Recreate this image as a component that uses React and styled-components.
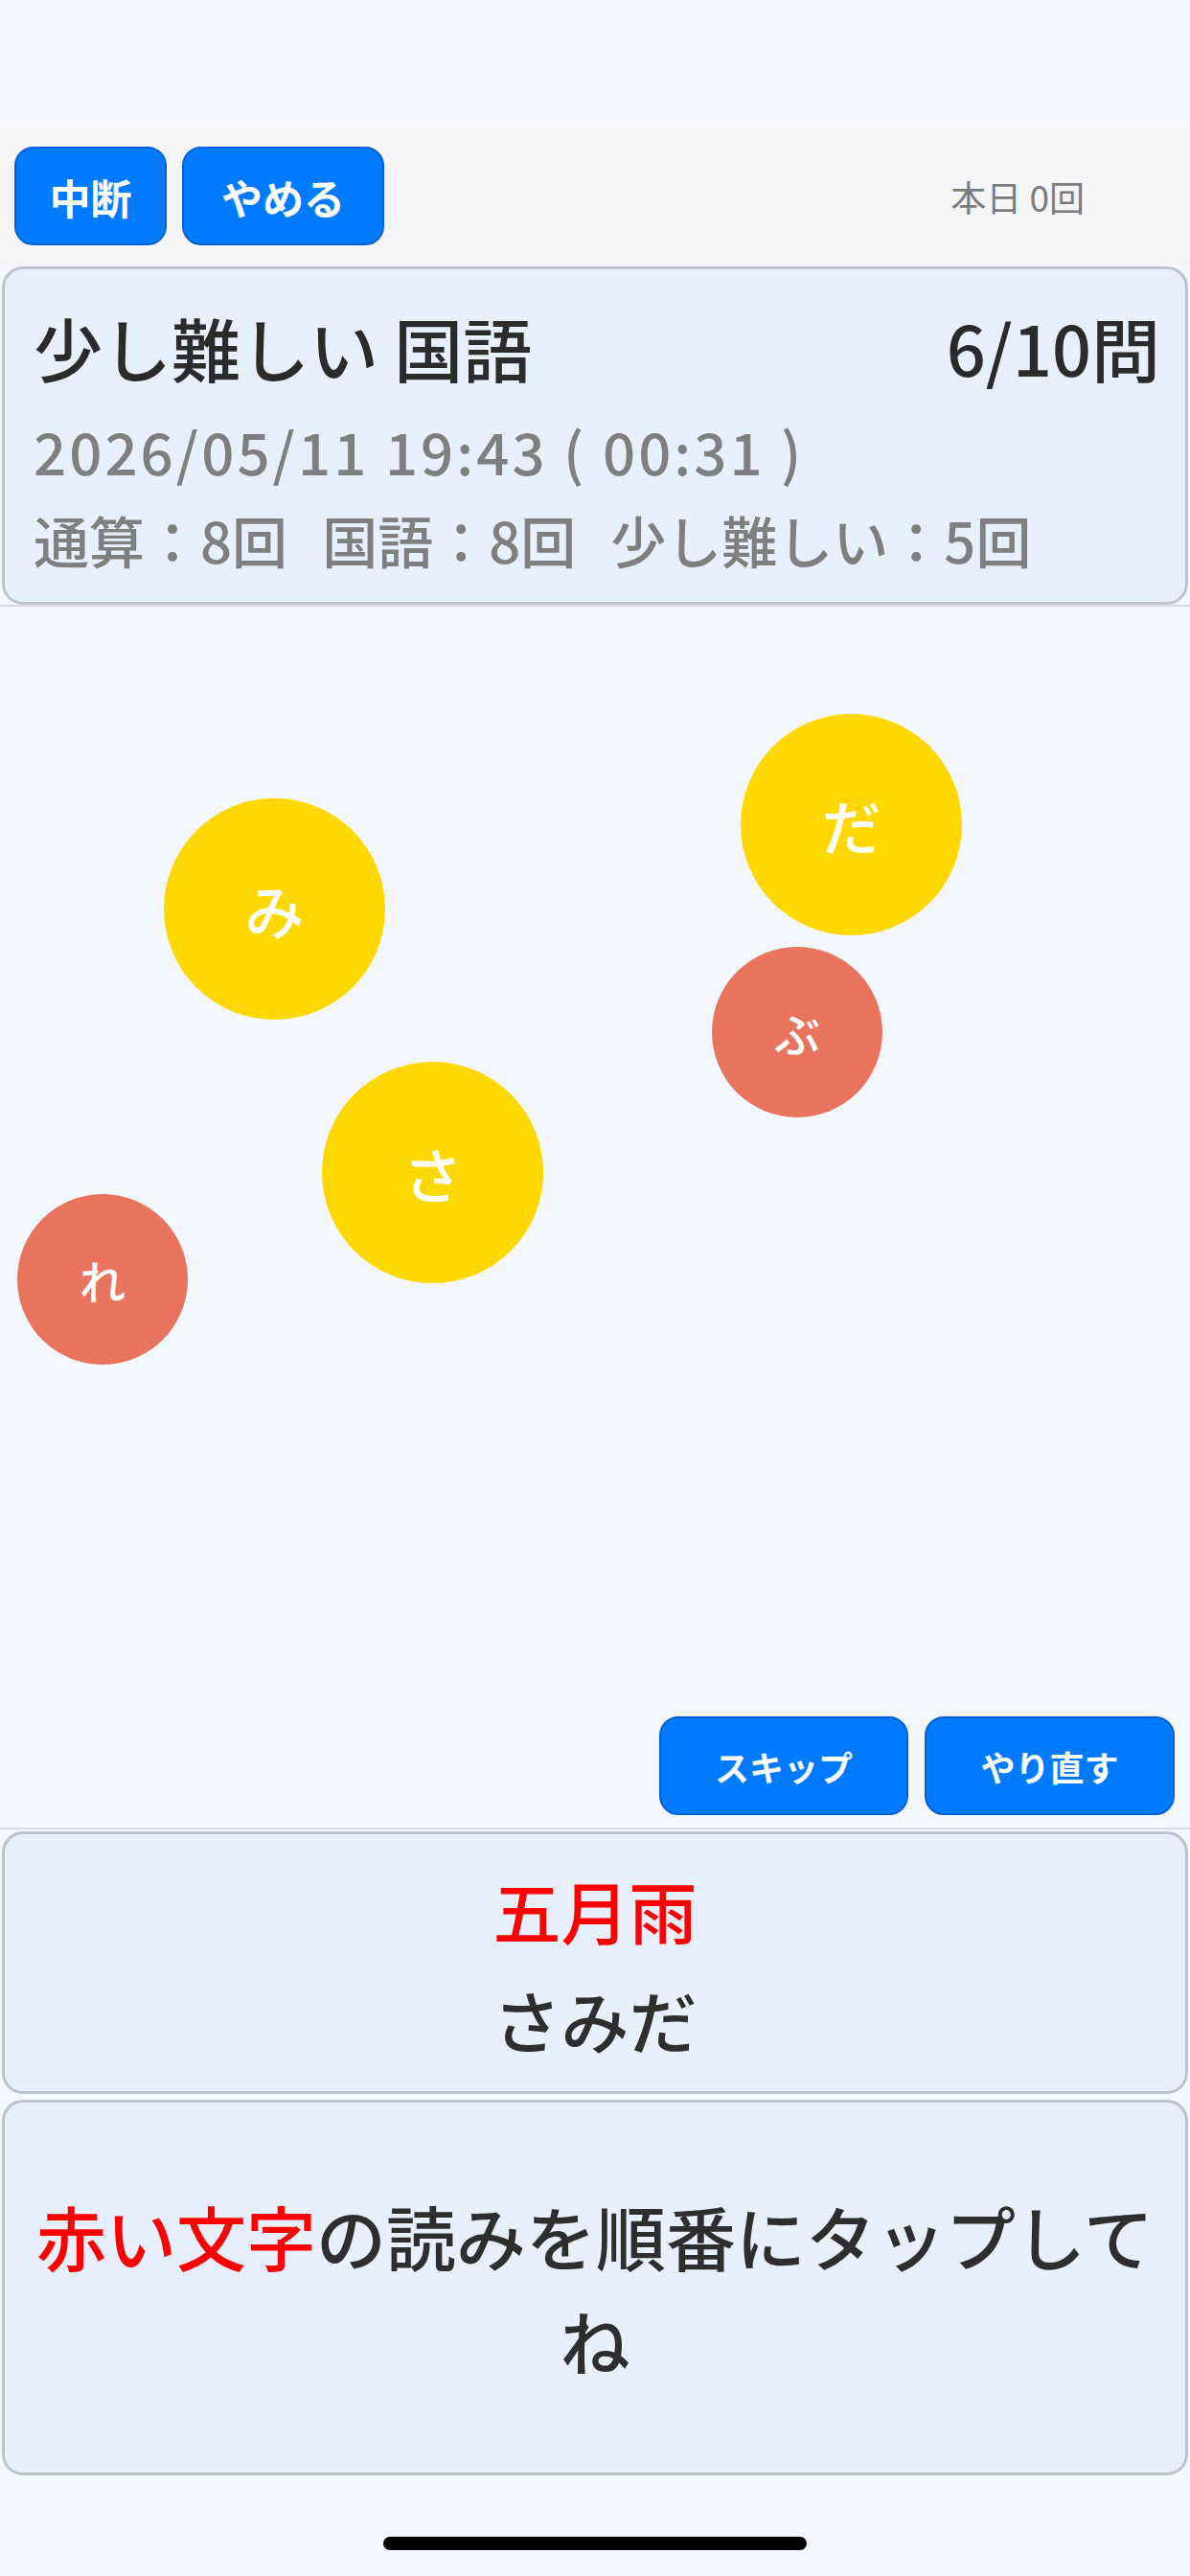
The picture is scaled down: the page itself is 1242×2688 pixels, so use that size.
import React from 'react'
import styled, { createGlobalStyle } from 'styled-components';

const GlobalStyle = createGlobalStyle`
  html, body {
    margin: 0;
    padding: 0;
    background: #f4f7fe;
  }
  body {
    font-family: "Noto Sans CJK JP", "Noto Sans", sans-serif;
    color: #333333;
  }
  * {
    box-sizing: border-box;
  }
`;

const Screen = styled.div`
  width: 1242px;
  min-height: 2688px;
  display: flex;
  flex-direction: column;
  background: #f4f7fe;
`;

const StatusArea = styled.div`
  height: 132px;
`;

const Toolbar = styled.div`
  height: 145px;
  background: #f5f5f7;
  display: flex;
  align-items: center;
  padding: 0 0 0 15px;
  gap: 16px;
`;

const BlueButton = styled.button`
  height: 103px;
  width: ${p => p.$width}px;
  padding: 0;
  border: 2px solid #0062d6;
  border-radius: 20px;
  background: #007aff;
  color: #ffffff;
  font-family: inherit;
  font-size: ${p => p.$size}px;
  font-weight: 700;
  display: flex;
  align-items: center;
  justify-content: center;
`;

const TodayLabel = styled.div`
  margin-left: auto;
  margin-right: 110px;
  font-size: 37px;
  color: #7c7c7c;
`;

const TopSection = styled.div`
  border-bottom: 2px solid #d9dbe0;
`;

const Card = styled.div`
  margin: 1px 2px 0;
  background: #e8effd;
  border: 3px solid #bfc3cc;
  border-radius: 22px;
`;

const InfoCard = styled(Card)`
  padding: 30px 26px 17px 30px;
  height: 353px;
`;

const TitleRow = styled.div`
  display: flex;
  justify-content: space-between;
  align-items: center;
  height: 100px;
  font-size: 72px;
  font-weight: 500;
  color: #2b2b2b;
  margin-bottom: 14px;
`;

const MetaLine = styled.div`
  height: ${p => p.$h}px;
  line-height: ${p => p.$h}px;
  font-size: ${p => p.$size}px;
  letter-spacing: ${p => p.$track || 0}px;
  word-spacing: ${p => p.$words || 0}px;
  font-weight: 500;
  color: #7f7f7f;
  white-space: pre;
`;

const PlayArea = styled.div`
  position: relative;
  height: 1276px;
  display: flex;
  justify-content: flex-end;
  align-items: flex-end;
  gap: 17px;
  padding: 0 16px 13px 0;
  border-bottom: 2px solid #d9dbe0;
`;

const Bubble = styled.div`
  position: absolute;
  left: ${p => p.$x}px;
  top: ${p => p.$y}px;
  width: ${p => p.$d}px;
  height: ${p => p.$d}px;
  border-radius: 50%;
  background: ${p => (p.$red ? '#e9745e' : '#ffd800')};
  color: #ffffff;
  font-size: ${p => (p.$red ? 48 : 62)}px;
  font-weight: 500;
  display: flex;
  align-items: center;
  justify-content: center;
`;

const AnswerCard = styled(Card)`
  margin-top: 2px;
  height: 274px;
  padding-top: 21px;
  text-align: center;
  font-size: 71px;
  font-weight: 500;
`;

const AnswerLine = styled.div`
  height: 114px;
  line-height: 114px;
  color: ${p => (p.$red ? '#ff0000' : '#2e2e2e')};
`;

const HintCard = styled(Card)`
  margin-top: 6px;
  height: 392px;
  padding: 0 18px;
  display: flex;
  align-items: center;
  justify-content: center;
  text-align: center;
  font-size: 73px;
  font-weight: 500;
  line-height: 109px;
  color: #2e2e2e;
`;

const Red = styled.span`
  color: #ff0000;
`;

const HomeBar = styled.div`
  width: 442px;
  height: 14px;
  border-radius: 7px;
  background: #000000;
  margin: 64px auto 0;
`;

const bubbles = [
  { ch: 'み', x: 171, y: 200, d: 231 },
  { ch: 'だ', x: 773, y: 112, d: 231 },
  { ch: 'ぶ', x: 743, y: 355, d: 178, red: true },
  { ch: 'さ', x: 336, y: 475, d: 231 },
  { ch: 'れ', x: 18, y: 613, d: 178, red: true },
];

const App = () => {
  return (
    <Screen>
      <GlobalStyle />
      <StatusArea />
      <TopSection>
        <Toolbar>
          <BlueButton $width={159} $size={43}>中断</BlueButton>
          <BlueButton $width={211} $size={43}>やめる</BlueButton>
          <TodayLabel>本日 0回</TodayLabel>
        </Toolbar>
        <InfoCard>
          <TitleRow>
            <span>少し難しい 国語</span>
            <span>6/10問</span>
          </TitleRow>
          <MetaLine $h={90} $size={60} $track={3}>2026/05/11 19:43 ( 00:31 )</MetaLine>
          <MetaLine $h={96} $size={58} $words={5}>通算：8回  国語：8回  少し難しい：5回</MetaLine>
        </InfoCard>
      </TopSection>
      <PlayArea>
        {bubbles.map(b => (
          <Bubble key={b.ch} $x={b.x} $y={b.y} $d={b.d} $red={b.red}>
            {b.ch}
          </Bubble>
        ))}
        <BlueButton $width={260} $size={36}>スキップ</BlueButton>
        <BlueButton $width={261} $size={36}>やり直す</BlueButton>
      </PlayArea>
      <AnswerCard>
        <AnswerLine $red>五月雨</AnswerLine>
        <AnswerLine>さみだ</AnswerLine>
      </AnswerCard>
      <HintCard>
        <div>
          <Red>赤い文字</Red>の読みを順番にタップしてね
        </div>
      </HintCard>
      <HomeBar />
    </Screen>
  )
}

export default App
